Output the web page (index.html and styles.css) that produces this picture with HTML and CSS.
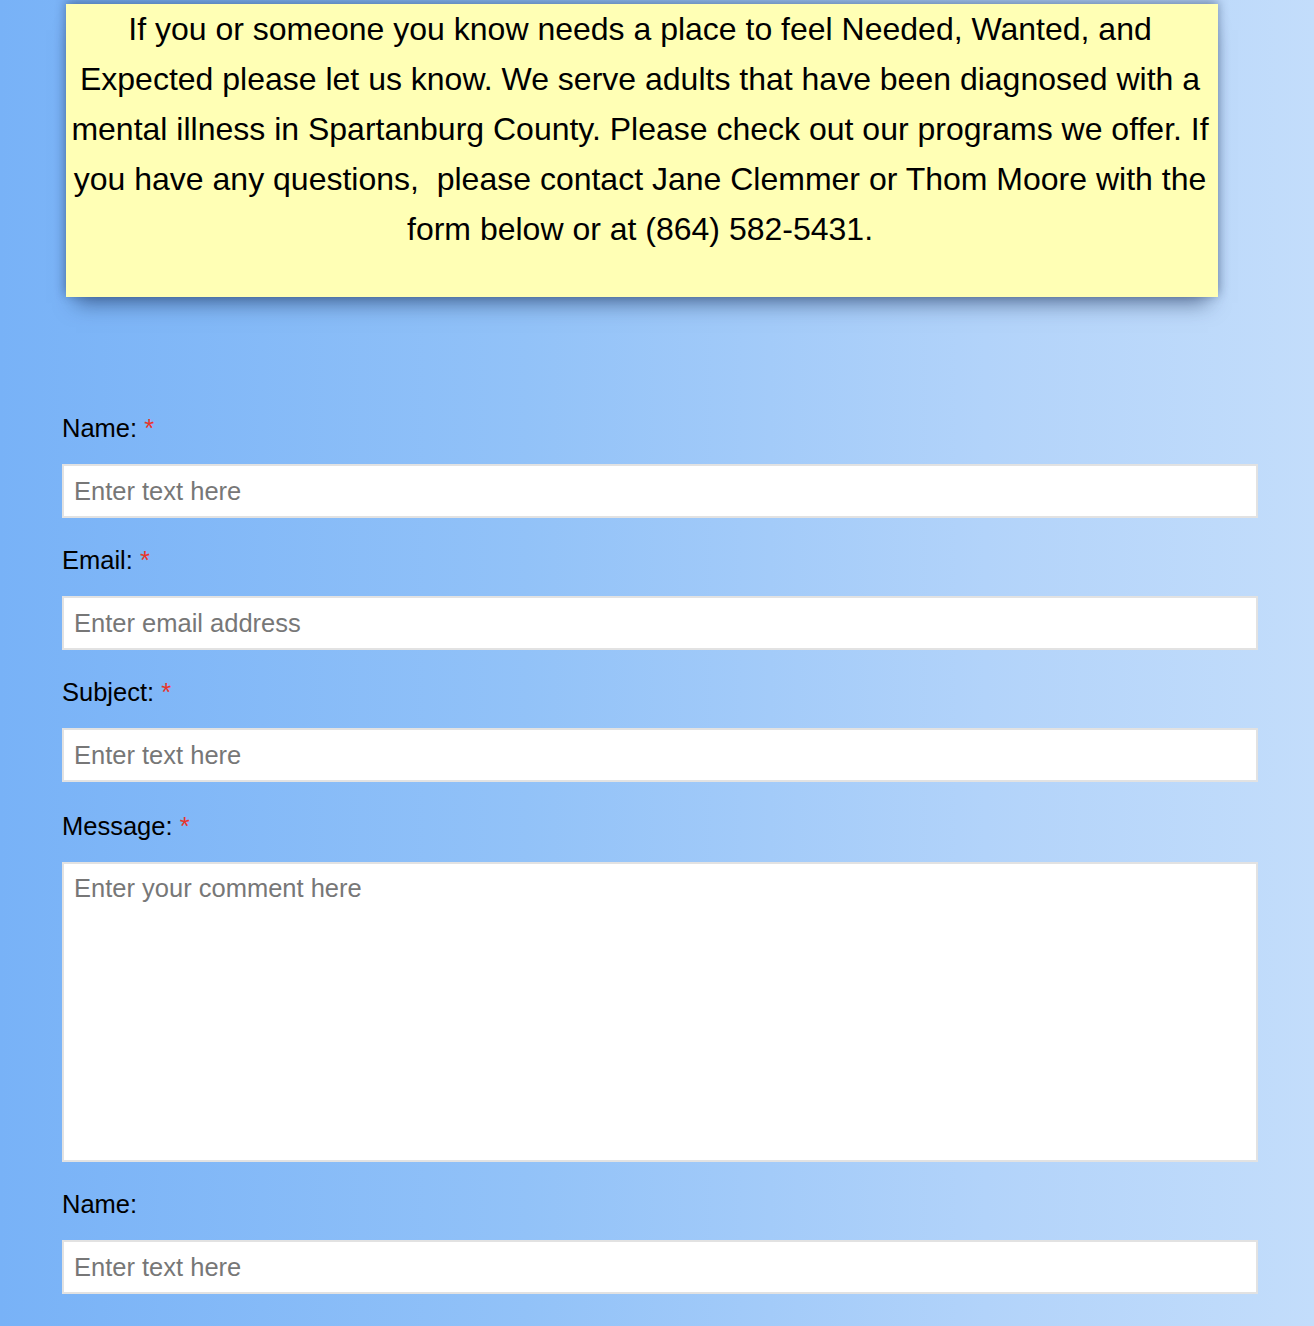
FILE: index.html
```html
<!DOCTYPE html>
<html lang="en">
<head>
<meta charset="utf-8">
<title>Contact</title>
<link rel="stylesheet" href="styles.css">
</head>
<body>
<div class="page">
  <section class="intro">
    <p>If you or someone you know needs a place to feel Needed, Wanted, and Expected please let us know. We serve adults that have been diagnosed with a mental illness in Spartanburg County. Please check out our programs we offer. If you have any questions, &nbsp;please contact Jane Clemmer or Thom Moore with the form below or at (864) 582-5431.</p>
  </section>

  <form class="contact-form">
    <div class="field">
      <label class="field-label" for="name">Name: <span class="req">*</span></label>
      <input class="field-input" id="name" type="text" placeholder="Enter text here">
    </div>
    <div class="field">
      <label class="field-label" for="email">Email: <span class="req">*</span></label>
      <input class="field-input" id="email" type="email" placeholder="Enter email address">
    </div>
    <div class="field field-wide-gap">
      <label class="field-label" for="subject">Subject: <span class="req">*</span></label>
      <input class="field-input" id="subject" type="text" placeholder="Enter text here">
    </div>
    <div class="field">
      <label class="field-label" for="message">Message: <span class="req">*</span></label>
      <textarea class="field-input field-textarea" id="message" placeholder="Enter your comment here"></textarea>
    </div>
    <div class="field">
      <label class="field-label" for="name2">Name:</label>
      <input class="field-input" id="name2" type="text" placeholder="Enter text here">
    </div>
  </form>
</div>
</body>
</html>
```

FILE: styles.css
```css
* { box-sizing: border-box; }

html, body {
  margin: 0;
  padding: 0;
}

body {
  min-height: 1326px;
  background: linear-gradient(to right, #78b2f7 0%, #92c2f8 40%, #b2d3fa 75%, #c3ddfb 100%);
  font-family: "Liberation Sans", Arial, Helvetica, sans-serif;
  color: #000;
  overflow: hidden;
}

.page {
  padding-top: 4px;
}

.intro {
  margin-left: 66px;
  width: 1152px;
  height: 293px;
  background: #ffffb5;
  padding: 0 8px 0 4px;
  box-shadow: 0 16px 20px -10px rgba(20, 40, 80, 0.55), 0 -3px 10px rgba(20, 40, 80, 0.45);
}

.intro p {
  margin: 0;
  font-size: 32px;
  line-height: 50px;
  text-align: center;
}

.contact-form {
  margin: 116px 0 0 62px;
  width: 1196px;
}

.field {
  margin-bottom: 27px;
}

.field-wide-gap {
  margin-bottom: 29px;
}

.field-label {
  display: block;
  font-size: 25.5px;
  line-height: 30px;
  margin-bottom: 21px;
}

.req {
  color: #e8352b;
}

.field-input {
  display: block;
  width: 100%;
  height: 54px;
  margin: 0;
  border: 2px solid #e2e2e2;
  background: #fff;
  padding: 0 10px;
  font-family: "Liberation Sans", Arial, Helvetica, sans-serif;
  font-size: 25.5px;
  color: #000;
  outline: none;
}

.field-input::placeholder {
  color: #777;
  opacity: 1;
}

.field-textarea {
  height: 300px;
  padding: 10px;
  resize: none;
  line-height: 29px;
}
```
